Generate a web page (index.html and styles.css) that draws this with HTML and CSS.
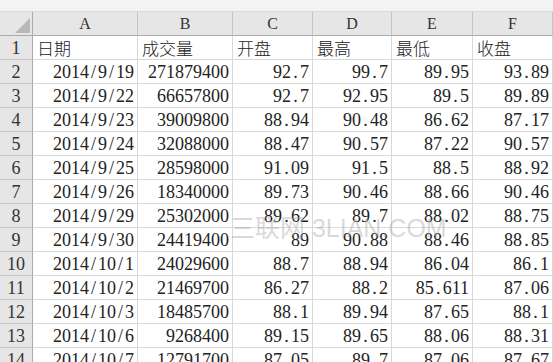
FILE: index.html
```html
<!DOCTYPE html>
<html lang="zh">
<head>
<meta charset="utf-8">
<title>Sheet</title>
<link rel="stylesheet" href="styles.css">
</head>
<body>
<div class="topbar"></div>
<div class="sheet">
  <div class="corner"></div>
  <div class="ch">A</div><div class="ch">B</div><div class="ch">C</div><div class="ch">D</div><div class="ch">E</div><div class="ch">F</div>

  <div class="rh">1</div><div class="c t">日期</div><div class="c t">成交量</div><div class="c t">开盘</div><div class="c t">最高</div><div class="c t">最低</div><div class="c t">收盘</div>

  <div class="rh">2</div><div class="c">2014<i>/</i>9<i>/</i>19</div><div class="c">271879400</div><div class="c">92<i>.</i>7</div><div class="c">99<i>.</i>7</div><div class="c">89<i>.</i>95</div><div class="c">93<i>.</i>89</div>
  <div class="rh">3</div><div class="c">2014<i>/</i>9<i>/</i>22</div><div class="c">66657800</div><div class="c">92<i>.</i>7</div><div class="c">92<i>.</i>95</div><div class="c">89<i>.</i>5</div><div class="c">89<i>.</i>89</div>
  <div class="rh">4</div><div class="c">2014<i>/</i>9<i>/</i>23</div><div class="c">39009800</div><div class="c">88<i>.</i>94</div><div class="c">90<i>.</i>48</div><div class="c">86<i>.</i>62</div><div class="c">87<i>.</i>17</div>
  <div class="rh">5</div><div class="c">2014<i>/</i>9<i>/</i>24</div><div class="c">32088000</div><div class="c">88<i>.</i>47</div><div class="c">90<i>.</i>57</div><div class="c">87<i>.</i>22</div><div class="c">90<i>.</i>57</div>
  <div class="rh">6</div><div class="c">2014<i>/</i>9<i>/</i>25</div><div class="c">28598000</div><div class="c">91<i>.</i>09</div><div class="c">91<i>.</i>5</div><div class="c">88<i>.</i>5</div><div class="c">88<i>.</i>92</div>
  <div class="rh">7</div><div class="c">2014<i>/</i>9<i>/</i>26</div><div class="c">18340000</div><div class="c">89<i>.</i>73</div><div class="c">90<i>.</i>46</div><div class="c">88<i>.</i>66</div><div class="c">90<i>.</i>46</div>
  <div class="rh">8</div><div class="c">2014<i>/</i>9<i>/</i>29</div><div class="c">25302000</div><div class="c">89<i>.</i>62</div><div class="c">89<i>.</i>7</div><div class="c">88<i>.</i>02</div><div class="c">88<i>.</i>75</div>
  <div class="rh">9</div><div class="c">2014<i>/</i>9<i>/</i>30</div><div class="c">24419400</div><div class="c">89</div><div class="c">90<i>.</i>88</div><div class="c">88<i>.</i>46</div><div class="c">88<i>.</i>85</div>
  <div class="rh">10</div><div class="c">2014<i>/</i>10<i>/</i>1</div><div class="c">24029600</div><div class="c">88<i>.</i>7</div><div class="c">88<i>.</i>94</div><div class="c">86<i>.</i>04</div><div class="c">86<i>.</i>1</div>
  <div class="rh">11</div><div class="c">2014<i>/</i>10<i>/</i>2</div><div class="c">21469700</div><div class="c">86<i>.</i>27</div><div class="c">88<i>.</i>2</div><div class="c">85<i>.</i>611</div><div class="c">87<i>.</i>06</div>
  <div class="rh">12</div><div class="c">2014<i>/</i>10<i>/</i>3</div><div class="c">18485700</div><div class="c">88<i>.</i>1</div><div class="c">89<i>.</i>94</div><div class="c">87<i>.</i>65</div><div class="c">88<i>.</i>1</div>
  <div class="rh">13</div><div class="c">2014<i>/</i>10<i>/</i>6</div><div class="c">9268400</div><div class="c">89<i>.</i>15</div><div class="c">89<i>.</i>65</div><div class="c">88<i>.</i>06</div><div class="c">88<i>.</i>31</div>
  <div class="rh">14</div><div class="c">2014<i>/</i>10<i>/</i>7</div><div class="c">12791700</div><div class="c">87<i>.</i>05</div><div class="c">89<i>.</i>7</div><div class="c">87<i>.</i>06</div><div class="c">87<i>.</i>67</div>

  <div class="watermark">三联网 3LIAN.COM</div>
</div>
</body>
</html>
```
FILE: styles.css
```css
html, body {
  margin: 0;
  padding: 0;
  background: #ffffff;
  overflow: hidden;
}

.topbar {
  height: 12px;
  background: #f3f3f3;
  border-bottom: 1px solid #dadada;
  box-sizing: border-box;
}

.sheet {
  position: relative;
  display: grid;
  grid-template-columns: 33px 105px 95px 80px 79px 81px 80px;
  grid-auto-rows: 24px;
  font-family: "Liberation Serif", "Noto Sans CJK SC", serif;
  font-size: 18px;
  color: #222;
}

.corner,
.ch,
.rh,
.c {
  box-sizing: border-box;
  border-right: 1px solid #d8d8d8;
  border-bottom: 1px solid #d8d8d8;
  white-space: nowrap;
  overflow: hidden;
}

.corner {
  position: relative;
  background: #e6e6e6;
  border-right-color: #ababab;
  border-bottom-color: #ababab;
}

.corner::after {
  content: "";
  position: absolute;
  right: 2px;
  bottom: 2px;
  width: 15px;
  height: 15px;
  background: #b8b8b8;
  clip-path: polygon(100% 0, 100% 100%, 0 100%);
}

.ch {
  background: #e6e6e6;
  border-right-color: #c4c4c4;
  border-bottom-color: #ababab;
  text-align: center;
  font-size: 16px;
  line-height: 23px;
  color: #333;
}

.rh {
  background: #e6e6e6;
  border-right-color: #ababab;
  border-bottom-color: #c4c4c4;
  text-align: center;
  line-height: 24px;
  color: #333;
}

.c {
  text-align: right;
  padding-right: 3px;
  line-height: 24px;
}

.c.t {
  text-align: left;
  padding-left: 4px;
  font-family: "Noto Sans CJK SC", sans-serif;
  font-size: 17px;
  font-weight: 300;
  line-height: 23px;
}

.c i {
  font-style: normal;
  display: inline-block;
  width: 9px;
  text-align: center;
}

.watermark {
  position: absolute;
  left: 230px;
  top: 196px;
  font-family: "Liberation Sans", "Noto Sans CJK SC", sans-serif;
  font-size: 25px;
  color: rgba(170, 170, 170, 0.45);
  pointer-events: none;
  white-space: nowrap;
}
```
